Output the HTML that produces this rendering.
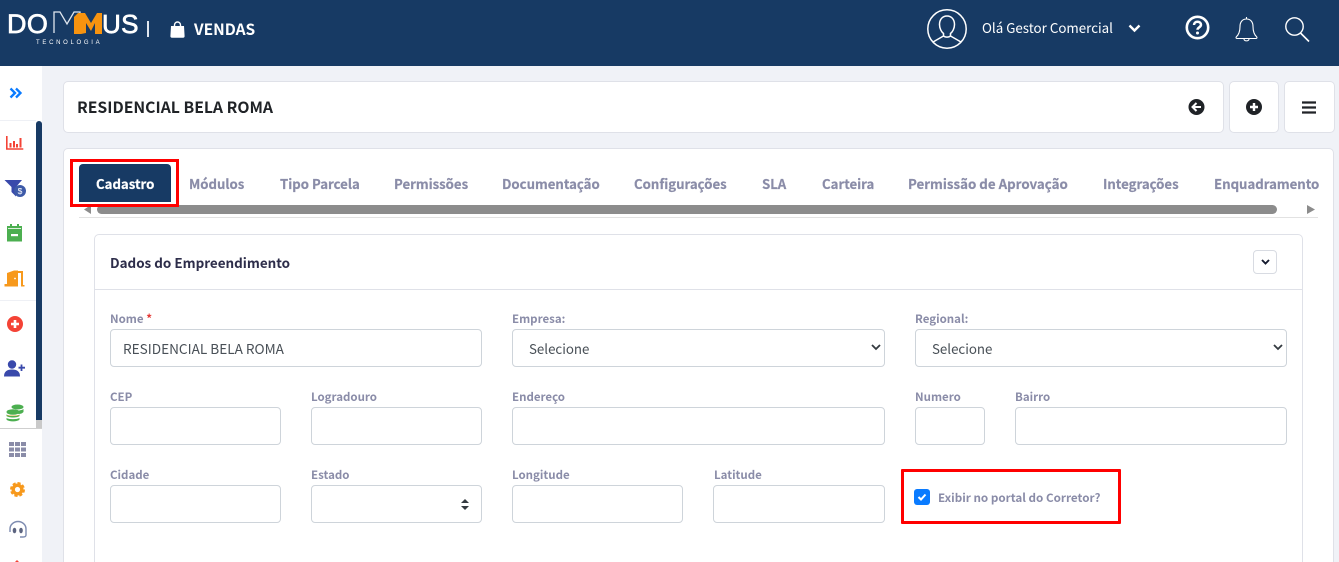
<!DOCTYPE html>
<html lang="pt"><head><meta charset="utf-8"><title>Dommus</title>
<style>
html,body{margin:0;padding:0;width:1339px;height:562px;overflow:hidden;background:#f0f2f7}
body{position:relative;font-family:"Noto Sans CJK JP","Liberation Sans",sans-serif;color:#353a48}
.a{position:absolute;box-sizing:border-box}
.t{position:absolute;white-space:nowrap;line-height:16px}
.tab{font-size:13.2px;font-weight:700;color:#8a8ca8;top:176px;-webkit-text-stroke:.2px currentColor}
.l{font-size:11.5px;font-weight:700;color:#8a8ca8;margin-top:1px}
.i{position:absolute;box-sizing:border-box;height:38px;background:#fff;border:1px solid #ced4da;border-radius:4px}
svg{position:absolute;overflow:visible}
</style></head><body>
<div class="a" style="left:0;top:0;width:1339px;height:66px;background:#173a64"></div>

<!-- logo -->
<div class="t" style="left:7px;top:9px;font-size:27px;line-height:30px;font-family:'Liberation Sans',sans-serif;color:#fff;letter-spacing:.4px;-webkit-text-stroke:.7px #fff">DO</div>
<svg style="left:53px;top:11px" width="50" height="24" viewBox="0 0 50 24"><path d="M1 22V1h6l7 12 7-12h6v21h-5" fill="none" stroke="#dfe6ef" stroke-width="1.300"/><path d="M21 24V7l4-4h7l6 10 6-10h5v21h-7V13l-4 8-5-8v10l-5 1z" fill="#f7930f" transform="translate(0 -1)"/></svg>
<div class="t" style="left:102px;top:9px;font-size:26px;line-height:30px;font-family:'Liberation Sans',sans-serif;color:#fff;letter-spacing:.3px;-webkit-text-stroke:.7px #fff">US</div>
<div class="t" style="left:36px;top:39px;font-size:6px;line-height:9px;color:#fff;letter-spacing:2.700px;font-family:'Liberation Sans',sans-serif">TECNOLOGIA</div>
<div class="a" style="left:147px;top:21px;width:1.500px;height:16px;background:#dfe6ef"></div>
<svg style="left:170px;top:21px" width="15" height="17" viewBox="0 0 15 17"><path d="M4.500 6V4a3 3 0 0 1 6 0v2" fill="none" stroke="#fff" stroke-width="1.400"/><path d="M1 5h13l.6 10a1.600 1.600 0 0 1-1.600 1.700H2A1.600 1.600 0 0 1 .4 15z" fill="#fff"/></svg>
<div class="t" style="left:194px;top:21px;font-size:15.500px;font-weight:700;color:#fff">VENDAS</div>

<!-- header right -->
<svg style="left:927px;top:9px" width="40" height="40" viewBox="0 0 40 40" fill="none" stroke="#fff" stroke-width="1.500"><circle cx="20" cy="20" r="19.200"/><path d="M20 7c-5 0-7.500 4-7.500 8.500 0 4 2 7.500 4 9v2.500L6 33M20 7c5 0 7.500 4 7.500 8.500 0 4-2 7.500-4 9v2.500L34 33M16.500 27c2 1.500 5 1.500 7 0"/></svg>
<div class="t" style="left:982px;top:20px;font-size:13.350px;color:#fff">Olá Gestor Comercial</div>
<svg style="left:1128px;top:24px" width="13" height="9" viewBox="0 0 13 9"><path d="M1.500 1.500 6.500 6.500 11.500 1.500" fill="none" stroke="#fff" stroke-width="2.400"/></svg>
<svg style="left:1185px;top:15px" width="25" height="25" viewBox="0 0 25 25"><circle cx="12.500" cy="12.500" r="10.700" fill="none" stroke="#fff" stroke-width="2.600"/><path d="M9 10c0-2 1.500-3.200 3.500-3.200S16 8 16 9.800c0 2.500-3.500 2.500-3.500 5" fill="none" stroke="#fff" stroke-width="2.500"/><circle cx="12.500" cy="18" r="1.500" fill="#fff"/></svg>
<svg style="left:1235px;top:16px" width="23" height="27" viewBox="0 0 23 27"><path d="M11.500 3c-4.500 0-6.500 3.500-6.500 7.500 0 5-1 8-3.800 10.500-.5.800 0 1.500 1 1.500h18.600c1 0 1.500-.7 1-1.500C19 18.500 18 15.500 18 10.500 18 6.500 16 3 11.500 3zM11.500 3V1M9 23c0 2.500 5 2.500 5 0" fill="none" stroke="#fff" stroke-width="1.100"/></svg>
<svg style="left:1284px;top:16px" width="26" height="27" viewBox="0 0 26 27"><circle cx="10.500" cy="10.500" r="8.700" fill="none" stroke="#fff" stroke-width="1.400"/><path d="M16.500 17 25 25.500" stroke="#fff" stroke-width="1.600"/></svg>

<!-- sidebar -->
<div class="a" style="left:0;top:66px;width:42px;height:496px;background:#fff"></div>
<div class="a" style="left:0;top:120px;width:36px;height:1px;background:#eef0f5"></div>
<div class="a" style="left:0;top:300px;width:36px;height:1px;background:#eef0f5"></div>
<div class="a" style="left:36px;top:121px;width:6px;height:299px;background:#173a64;border-radius:3px 3px 0 0"></div>
<div class="a" style="left:36px;top:420px;width:6px;height:8px;background:#c9c9c9"></div>
<div class="a" style="left:0;top:428px;width:42px;height:1px;background:#cfcfcf"></div>
<svg style="left:9px;top:87px" width="13" height="12" viewBox="0 0 13 12"><path d="M1.500 1.500 6 6l-4.500 4.500M7 1.500 11.500 6 7 10.500" fill="none" stroke="#0a7bff" stroke-width="2.300"/></svg>
<svg style="left:6px;top:136px" width="18" height="14" viewBox="0 0 18 14"><path d="M.8 0v13h16.500" fill="none" stroke="#f44336" stroke-width="1.600"/><path d="M4.500 7v4.500M8 5v6.500M11 8v3.500M14.500 2v9.500" stroke="#f44336" stroke-width="2"/></svg>
<svg style="left:4px;top:180px" width="22" height="17" viewBox="0 0 22 17"><path d="M.5 0h17.500L12 7v9.500L7.500 12V7z" fill="#3949ab"/><circle cx="16" cy="11" r="6" fill="#3d5aa8"/><text x="16" y="14" text-anchor="middle" font-size="8.500" fill="#fff" font-family="Liberation Sans">$</text></svg>
<svg style="left:7px;top:224px" width="15" height="18" viewBox="0 0 15 18"><path d="M3 0h2v2h5V0h2v2h3v15.500H0V2h3z" fill="#4caf50"/><rect x="1" y="4.200" width="13" height=".8" fill="#fff"/><rect x="4" y="10" width="7" height="2.200" fill="#fff"/></svg>
<svg style="left:4px;top:270px" width="21" height="17" viewBox="0 0 21 17"><path d="M3 14V3l7-2.500H14V16.500H.5V14z" fill="#f7991c"/><path d="M14 1h5v14h1.500v1.500H17V3h-3z" fill="#f7991c"/><circle cx="11" cy="8.500" r=".9" fill="#fff"/></svg>
<svg style="left:7px;top:316px" width="16" height="16" viewBox="0 0 16 16"><circle cx="8" cy="8" r="8" fill="#f44336"/><path d="M8 4v8M4 8h8" stroke="#fff" stroke-width="2.600"/></svg>
<svg style="left:4px;top:360px" width="21" height="17" viewBox="0 0 21 17"><circle cx="8" cy="4.500" r="4.200" fill="#3949ab"/><path d="M0 16.500c0-5 3-7 8-7s8 2 8 7z" fill="#3949ab"/><path d="M17.500 4.500v6.500M14.500 7.700h6.500" stroke="#3949ab" stroke-width="1.800"/></svg>
<svg style="left:6px;top:404px" width="18" height="18" viewBox="0 0 18 18"><ellipse cx="11.500" cy="3" rx="6" ry="2.500" fill="#4caf50"/><path d="M6 5.500c2 1.500 9 1.500 11.500-.5v3c-1.500 1.500-3 2-5 2z" fill="#4caf50"/><ellipse cx="7" cy="8" rx="6.500" ry="2.800" fill="#4caf50"/><path d="M.500 10.500c2 1.500 11 1.500 13 0v1.500c-2 2-11 2-13 0zM.500 14c2 1.500 11 1.500 13 0v1.500c-2 2.500-11 2.500-13 0z" fill="#4caf50"/><path d="M1 11.800h12" stroke="#e8a33a" stroke-width=".5"/></svg>
<svg style="left:9px;top:442px" width="17" height="15" viewBox="0 0 17 15" fill="#8a8ca8"><rect width="5" height="4"/><rect x="6" width="5" height="4"/><rect x="12" width="5" height="4"/><rect y="5.500" width="5" height="4"/><rect x="6" y="5.500" width="5" height="4"/><rect x="12" y="5.500" width="5" height="4"/><rect y="11" width="5" height="4"/><rect x="6" y="11" width="5" height="4"/><rect x="12" y="11" width="5" height="4"/></svg>
<svg style="left:10px;top:482px" width="15" height="15" viewBox="0 0 15 15"><circle cx="7.500" cy="7.500" r="4.300" fill="none" stroke="#f7991c" stroke-width="3.400"/><circle cx="7.500" cy="7.500" r="6.600" fill="none" stroke="#f7991c" stroke-width="1.800" stroke-dasharray="3.200 1.950"/></svg>
<svg style="left:9px;top:521px" width="18" height="17" viewBox="0 0 18 17"><path d="M1 11V8a8 7.500 0 0 1 16 0v6c0 1.500-1 2-3 2h-3" fill="none" stroke="#7d8bb0" stroke-width="1.400"/><ellipse cx="5.500" cy="9.500" rx="1.800" ry="2.800" fill="#5c6480"/><ellipse cx="12" cy="9.500" rx="1.800" ry="2.800" fill="#5c6480"/></svg>
<svg style="left:13px;top:559px" width="8" height="4" viewBox="0 0 8 4"><path d="M4 1 7 4H1z" fill="#f44336"/></svg>

<!-- top cards -->
<div class="a" style="left:63px;top:81px;width:1161px;height:52px;background:#fff;border:1px solid #dfe1e8;border-radius:5px"></div>
<div class="t" style="left:77px;top:99px;font-size:15.750px;font-weight:700;color:#202327">RESIDENCIAL BELA ROMA</div>
<div class="a" style="left:1229px;top:81px;width:50px;height:52px;background:#fff;border:1px solid #dfe1e8;border-radius:5px"></div>
<div class="a" style="left:1284px;top:81px;width:51px;height:52px;background:#fff;border:1px solid #dfe1e8;border-radius:5px"></div>
<svg style="left:1189px;top:99px" width="16" height="16" viewBox="0 0 16 16"><circle cx="7.500" cy="8" r="8" fill="#202327"/><path d="M12 8H4M7.500 4l-4 4 4 4" fill="none" stroke="#fff" stroke-width="2"/></svg>
<svg style="left:1246px;top:99px" width="16" height="16" viewBox="0 0 16 16"><circle cx="8" cy="8" r="8" fill="#202327"/><path d="M8 4v8M4 8h8" stroke="#fff" stroke-width="2.400"/></svg>
<svg style="left:1302px;top:101px" width="14" height="13" viewBox="0 0 14 13"><path d="M0 1.500h14M0 6.500h14M0 11.500h14" stroke="#202327" stroke-width="2.200"/></svg>

<!-- main card -->
<div class="a" style="left:63px;top:148px;width:1271px;height:430px;background:#fff;border:1px solid #dfe1e8;border-radius:5px"></div>
<div class="a" style="left:79px;top:164px;width:92px;height:38px;background:#173a64;border-radius:4px 4px 0 0"></div>
<div class="t tab" style="left:96px;color:#fff">Cadastro</div>
<div class="t tab" style="left:189px">Módulos</div>
<div class="t tab" style="left:280px">Tipo Parcela</div>
<div class="t tab" style="left:394px">Permissões</div>
<div class="t tab" style="left:502px">Documentação</div>
<div class="t tab" style="left:634px">Configurações</div>
<div class="t tab" style="left:762px">SLA</div>
<div class="t tab" style="left:822px">Carteira</div>
<div class="t tab" style="left:908px;font-size:13.300px">Permissão de Aprovação</div>
<div class="t tab" style="left:1103px">Integrações</div>
<div class="t tab" style="left:1214px">Enquadramento</div>
<div class="a" style="left:97px;top:205px;width:1180px;height:9px;background:#8c8c8c;border-radius:5px"></div>
<svg style="left:83px;top:205px" width="8" height="9"><path d="M8 0v9L1 4.500z" fill="#8c8c8c"/></svg>
<svg style="left:1306px;top:205px" width="8" height="9"><path d="M1 0v9l8-4.500z" fill="#8c8c8c"/></svg>
<div class="a" style="left:79px;top:217px;width:1239px;height:1px;background:#e2e2e2"></div>

<!-- inner card -->
<div class="a" style="left:94px;top:234px;width:1209px;height:340px;background:#fff;border:1px solid #dfe1e8;border-radius:5px"></div>
<div class="a" style="left:95px;top:289px;width:1207px;height:1px;background:#dfe1e8"></div>
<div class="t" style="left:110px;top:254px;font-size:13.450px;font-weight:700;color:#2d2d4a">Dados do Empreendimento</div>
<div class="a" style="left:1253px;top:250px;width:24px;height:24px;background:#fff;border:1px solid #d8dbe2;border-radius:4px"></div>
<svg style="left:1261px;top:259px" width="9" height="6" viewBox="0 0 9 6"><path d="M1 1 4.500 4.500 8 1" fill="none" stroke="#141a2e" stroke-width="1.900"/></svg>

<!-- form -->
<div class="t l" style="left:110px;top:310px">Nome <span style="color:#e53935">*</span></div>
<div class="i" style="left:110px;top:329px;width:372px"></div>
<div class="t" style="left:123px;top:340px;font-size:13.600px;color:#495057">RESIDENCIAL BELA ROMA</div>
<div class="t l" style="left:512px;top:310px">Empresa:</div>
<div class="i" style="left:512px;top:329px;width:373px"></div>
<div class="t" style="left:529px;top:341px;font-size:13.300px;color:#495057">Selecione</div>
<svg style="left:871px;top:344px" width="10" height="7" viewBox="0 0 10 7"><path d="M1 1 5 5 9 1" fill="none" stroke="#343a40" stroke-width="1.800"/></svg>
<div class="t l" style="left:915px;top:310px">Regional:</div>
<div class="i" style="left:915px;top:329px;width:372px"></div>
<div class="t" style="left:932px;top:341px;font-size:13.300px;color:#495057">Selecione</div>
<svg style="left:1273px;top:344px" width="10" height="7" viewBox="0 0 10 7"><path d="M1 1 5 5 9 1" fill="none" stroke="#343a40" stroke-width="1.800"/></svg>

<div class="t l" style="left:110px;top:388px">CEP</div>
<div class="i" style="left:110px;top:407px;width:171px"></div>
<div class="t l" style="left:311px;top:388px">Logradouro</div>
<div class="i" style="left:311px;top:407px;width:171px"></div>
<div class="t l" style="left:512px;top:388px">Endereço</div>
<div class="i" style="left:512px;top:407px;width:373px"></div>
<div class="t l" style="left:915px;top:388px">Numero</div>
<div class="i" style="left:915px;top:407px;width:70px"></div>
<div class="t l" style="left:1015px;top:388px">Bairro</div>
<div class="i" style="left:1015px;top:407px;width:272px"></div>

<div class="t l" style="left:110px;top:466px">Cidade</div>
<div class="i" style="left:110px;top:485px;width:171px"></div>
<div class="t l" style="left:311px;top:466px">Estado</div>
<div class="i" style="left:311px;top:485px;width:171px"></div>
<svg style="left:461px;top:499px" width="8" height="11" viewBox="0 0 8 11"><path d="M4 0 8 4H0zM4 11 8 7H0z" fill="#343a40"/></svg>
<div class="t l" style="left:512px;top:466px">Longitude</div>
<div class="i" style="left:512px;top:485px;width:171px"></div>
<div class="t l" style="left:714px;top:466px">Latitude</div>
<div class="i" style="left:713px;top:485px;width:172px"></div>

<div class="a" style="left:914px;top:489px;width:16px;height:16px;background:#0a7bff;border-radius:3px"></div>
<svg style="left:914px;top:489px" width="16" height="16" viewBox="0 0 16 16"><path d="M4.500 8 7 10.500 11.500 5.500" fill="none" stroke="#fff" stroke-width="2"/></svg>
<div class="t l" style="left:938px;top:489px;font-size:11.650px">Exibir no portal do Corretor?</div>

<!-- highlights -->
<div class="a" style="left:70px;top:159px;width:109px;height:48px;border:3px solid #f00"></div>
<div class="a" style="left:901px;top:469px;width:220px;height:55px;border:3px solid #f00;border-radius:1px"></div>
</body></html>
